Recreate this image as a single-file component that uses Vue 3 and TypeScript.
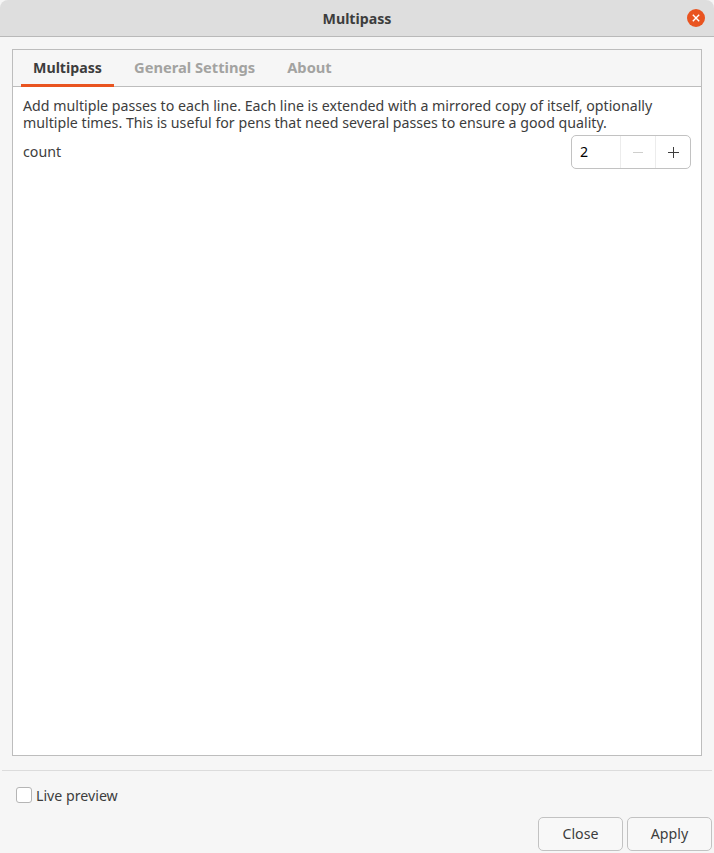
<script setup lang="ts">
import { ref } from 'vue';

const tabs = ['Multipass', 'General Settings', 'About'];
const activeTab = ref('Multipass');
const count = ref(2);
const livePreview = ref(false);
</script>

<template>
  <div class="dialog">
    <header class="titlebar">
      <span class="title">Multipass</span>
      <button class="close-x" type="button" aria-label="Close">
        <svg width="18" height="18" viewBox="0 0 18 18">
          <circle cx="9" cy="9" r="9" fill="#e95420" />
          <path d="M5.8 5.8l6.4 6.4M12.2 5.8l-6.4 6.4" stroke="#fff" stroke-width="1.4" fill="none" />
        </svg>
      </button>
    </header>

    <main class="content">
      <section class="notebook">
        <nav class="tabs">
          <div
            v-for="t in tabs"
            :key="t"
            class="tab"
            :class="{ active: t === activeTab }"
            @click="activeTab = t"
          >
            {{ t }}
          </div>
        </nav>
        <div class="page">
          <p class="desc">
            Add multiple passes to each line. Each line is extended with a mirrored copy of itself, optionally<br />
            multiple times. This is useful for pens that need several passes to ensure a good quality.
          </p>
          <div class="row">
            <span>count</span>
            <div class="spin">
              <span class="spin-value">{{ count }}</span>
              <button class="spin-btn" type="button" aria-label="Decrease" @click="count--">
                <svg width="12" height="12" viewBox="0 0 12 12"><path d="M1 6.5h10" stroke="#cfcfcd" fill="none" /></svg>
              </button>
              <button class="spin-btn" type="button" aria-label="Increase" @click="count++">
                <svg width="12" height="12" viewBox="0 0 12 12"><path d="M1 6.5h11M6.5 1v11" stroke="#3d3d3d" fill="none" /></svg>
              </button>
            </div>
          </div>
        </div>
      </section>
    </main>

    <footer class="footer">
      <label class="check">
        <input v-model="livePreview" type="checkbox" />
        <span>Live preview</span>
      </label>
      <div class="actions">
        <button class="btn" type="button">Close</button>
        <button class="btn" type="button">Apply</button>
      </div>
    </footer>
  </div>
</template>

<style>
html, body {
  margin: 0;
  background: #f6f6f6;
}
</style>

<style scoped>
.dialog {
  width: 714px;
  height: 853px;
  display: flex;
  flex-direction: column;
  background: #f6f6f6;
  color: #3d3d3d;
  font-family: "Noto Sans", "Open Sans", sans-serif;
  font-size: 14.2px;
  overflow: hidden;
}
.titlebar {
  position: relative;
  flex: none;
  height: 36px;
  display: flex;
  align-items: center;
  justify-content: center;
  background: #dedede;
  border-bottom: 1px solid #b9b9b9;
  border-radius: 8px 8px 0 0;
}
.title {
  font-weight: 700;
  font-size: 14.2px;
}
.close-x {
  position: absolute;
  top: 9px;
  right: 9px;
  width: 18px;
  height: 18px;
  padding: 0;
  border: none;
  background: none;
  display: block;
}
.close-x svg {
  display: block;
}
.content {
  flex: none;
  height: 734px;
  box-sizing: border-box;
  padding: 12px 10px 14px;
  border-bottom: 1px solid #dcdcdc;
  margin: 0 2px;
  display: flex;
}
.notebook {
  flex: 1;
  display: flex;
  flex-direction: column;
  border: 1px solid #bdbdbd;
  background: #fff;
}
.tabs {
  flex: none;
  height: 36px;
  display: flex;
  padding-left: 8px;
  background: #f6f6f6;
  border-bottom: 1px solid #bdbdbd;
}
.tab {
  box-sizing: border-box;
  height: 37px;
  padding: 0 12px;
  margin-right: 8px;
  display: flex;
  align-items: center;
  justify-content: center;
  font-weight: 700;
  font-size: 14.7px;
  color: #a3a3a1;
  border-bottom: 3px solid transparent;
}
.tab.active {
  min-width: 93px;
  font-size: 14.2px;
  color: #3d3d3d;
  border-bottom-color: #e95420;
}
.page {
  flex: 1;
  padding: 10px;
}
.desc {
  margin: 0;
  line-height: 17px;
}
.row {
  display: flex;
  justify-content: space-between;
  align-items: flex-start;
  margin-top: 5px;
  line-height: 17px;
}
.row > span:first-child {
  margin-top: 7px;
}
.spin {
  display: flex;
  height: 34px;
  width: 120px;
  box-sizing: border-box;
  margin-top: -1px;
  border: 1px solid #c2c2c2;
  border-radius: 5px;
  background: #fff;
}
.spin-value {
  flex: 1;
  padding-left: 8px;
  line-height: 32px;
  color: #000;
}
.spin-btn {
  width: 35px;
  padding: 0;
  border: none;
  border-left: 1px solid #ececec;
  background: none;
  display: flex;
  align-items: center;
  justify-content: center;
}
.footer {
  flex: 1;
  display: flex;
  flex-direction: column;
}
.check {
  display: flex;
  align-items: center;
  gap: 4px;
  margin: 15px 0 0 16px;
  height: 18px;
}
.check input {
  appearance: none;
  width: 16px;
  height: 16px;
  margin: 0;
  border: 1px solid #b5b5b5;
  border-radius: 3px;
  background: #fff;
}
.actions {
  margin-top: auto;
  display: flex;
  justify-content: flex-end;
  gap: 4px;
  padding: 0 2px 2px 0;
}
.btn {
  width: 85px;
  height: 34px;
  box-sizing: border-box;
  border: 1px solid #c2c2c2;
  border-radius: 5px;
  background: #f8f8f8;
  color: #3d3d3d;
  font: inherit;
  padding: 0 0 1px;
}
</style>
